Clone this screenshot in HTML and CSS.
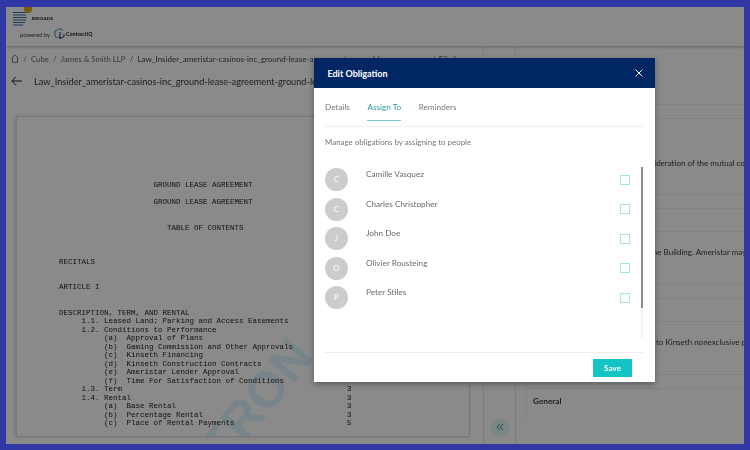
FILE: index.html
```html
<!DOCTYPE html>
<html>
<head>
<meta http-equiv="Content-Type" content="text/html; charset=utf-8"/>
<title>Edit Obligation</title>
<link rel="stylesheet" href="styles.css">
</head>
<body>
<div class="frame">
  <div class="page">
    <header class="topbar">
      <div class="brand">
        <svg class="brand-mark" width="15" height="15" viewBox="0 0 15 15">
          <g stroke="#2f6fa8" stroke-width="1.1">
            <path d="M0 1.5H13M0 4H13M0 6.5H13.5M0 9H13M0 11.5H12M0 14H10"/>
          </g>
          <circle cx="15" cy="-2" r="4" fill="#e0a90f"/>
        </svg>
        <span class="brand-name">BRIGADE</span>
      </div>
      <div class="powered">
        <span>powered by</span>
        <svg width="11" height="12" viewBox="0 0 11 12">
          <path d="M9 2.2L5.5 .7L1 3.2V8.5L3 9.8" fill="none" stroke="#2a86a8" stroke-width="1"/>
          <path d="M6 4V10M4 8.5L6 10.7L10 8.5V6" fill="none" stroke="#14305c" stroke-width="1"/>
        </svg>
        <span class="powered-name">ContractIQ</span>
      </div>
    </header>
    <div class="main">
      <div class="left">
        <div class="crumbs">
          <svg width="8" height="9" viewBox="0 0 8 9"><path d="M.5 4.2L4 .8L7.5 4.2M1.5 3.5V8.3H6.5V3.5" fill="none" stroke="#555" stroke-width=".8"/></svg>
          <span>/</span><span>Cube</span><span>/</span><span>James &amp; Smith LLP</span><span>/</span><span class="crumb-file">Law_Insider_ameristar-casinos-inc_ground-lease-agreement-ground-lease-agreement-Filed</span>
        </div>
        <div class="title-row">
          <svg width="11" height="10" viewBox="0 0 11 10"><path d="M11 5H1M5 .7L.8 5L5 9.3" fill="none" stroke="#222" stroke-width="1"/></svg>
          <span class="doc-title">Law_Insider_ameristar-casinos-inc_ground-lease-agreement-ground-lease-agreement-Filed</span>
        </div>
        <div class="doc">
          <div class="watermark">TRON</div>
<pre class="doc-text">                     GROUND LEASE AGREEMENT

                     GROUND LEASE AGREEMENT


                        TABLE OF CONTENTS



RECITALS


ARTICLE I


DESCRIPTION, TERM, AND RENTAL
     1.1. Leased Land; Parking and Access Easements
     1.2. Conditions to Performance
          (a)  Approval of Plans
          (b)  Gaming Commission and Other Approvals
          (c)  Kinseth Financing
          (d)  Kinseth Construction Contracts
          (e)  Ameristar Lender Approval
          (f)  Time For Satisfaction of Conditions
     1.3. Term                                                  3
     1.4. Rental                                                3
          (a)  Base Rental                                      3
          (b)  Percentage Rental                                3
          (c)  Place of Rental Payments                         5</pre>
        </div>
      </div>
      <div class="rail">
        <div class="collapse">
          <svg width="8" height="8" viewBox="0 0 8 8"><path d="M3.6 1L1 4L3.6 7M6.8 1L4.2 4L6.8 7" fill="none" stroke="#2a7f86" stroke-width=".9"/></svg>
        </div>
      </div>
      <div class="right">
        <div class="row row-head"></div>
        <div class="row row-long"><p class="clause-a">consideration of the mutual covenants</p></div>
        <div class="row row-head"></div>
        <div class="row row-sub"></div>
        <div class="row row-body"><p class="clause-b">the Building. Ameristar may</p></div>
        <div class="row row-head"></div>
        <div class="row row-sub"></div>
        <div class="row row-body"><p class="clause-c">to Kinseth nonexclusive parking</p></div>
        <div class="row row-head"></div>
        <div class="general">General</div>
      </div>
    </div>
  </div>

  <div class="backdrop"></div>

  <div class="modal">
    <div class="modal-head">
      <span>Edit Obligation</span>
      <svg width="8" height="8" viewBox="0 0 8 8"><path d="M.7 .7L7.3 7.3M7.3 .7L.7 7.3" stroke="#fff" stroke-width="1"/></svg>
    </div>
    <div class="tabs">
      <span class="tab">Details</span>
      <span class="tab tab-active">Assign To</span>
      <span class="tab">Reminders</span>
    </div>
    <p class="hint">Manage obligations by assigning to people</p>
    <div class="people">
      <div class="person"><span class="avatar">C</span><span class="name">Camille Vasquez</span><span class="check"></span></div>
      <div class="person"><span class="avatar">C</span><span class="name">Charles Christopher</span><span class="check"></span></div>
      <div class="person"><span class="avatar">J</span><span class="name">John Doe</span><span class="check"></span></div>
      <div class="person"><span class="avatar">O</span><span class="name">Olivier Rousteing</span><span class="check"></span></div>
      <div class="person"><span class="avatar">P</span><span class="name">Peter Stiles</span><span class="check"></span></div>
      <div class="scroll-track"><div class="scroll-thumb"></div></div>
    </div>
    <div class="modal-foot">
      <button class="save">Save</button>
    </div>
  </div>
</div>
</body>
</html>
```

FILE: styles.css
```css
html, body {
  margin: 0;
  padding: 0;
}

body {
  font-family: "Lato", sans-serif;
  background-color: #2f38a4;
}

.frame {
  position: relative;
  width: 750px;
  height: 450px;
  box-sizing: border-box;
  border: 6px solid #2f38a4;
  border-top-width: 7px;
  overflow: hidden;
}

.page {
  height: 100%;
  background-color: #fff;
  display: flex;
  flex-direction: column;
  filter: blur(0.4px);
}

/* top bar */
.topbar {
  height: 39px;
  box-sizing: border-box;
  padding: 4px 0 0 7px;
  box-shadow: 0 1px 3px rgba(0, 0, 0, 0.3);
}

.brand {
  display: flex;
  align-items: center;
  gap: 4px;
  height: 15px;
}

.brand-mark {
  overflow: visible;
}

.brand-name {
  font-size: 4.4px;
  font-weight: 900;
  letter-spacing: 0.3px;
  color: #222;
}

.powered {
  display: flex;
  align-items: center;
  gap: 4px;
  margin: 2px 0 0 7px;
  font-size: 5.8px;
  color: #444;
}

.powered-name {
  margin-left: -3px;
  font-size: 5.3px;
  font-weight: 700;
  color: #222;
}

.main {
  flex: 1;
  display: flex;
  min-height: 0;
}

/* document side */
.left {
  width: 477px;
  flex: none;
  box-sizing: border-box;
  padding-left: 5px;
  display: flex;
  flex-direction: column;
  overflow: hidden;
}

.crumbs {
  display: flex;
  align-items: center;
  gap: 4.2px;
  height: 11px;
  margin-top: 7px;
  font-size: 7.8px;
  color: #6a6a6a;
  white-space: nowrap;
}

.crumb-file {
  font-size: 8px;
  color: #444;
}

.title-row {
  display: flex;
  align-items: center;
  gap: 12px;
  height: 14px;
  margin-top: 10px;
  font-size: 9.2px;
  color: #3a3a3a;
  white-space: nowrap;
}

.doc {
  position: relative;
  flex: 1;
  margin: 28px 13px 7px 5px;
  min-height: 0;
  background-color: #fff;
  border: 1px solid #ddd;
  box-shadow: -1px 0 3px rgba(0, 0, 0, 0.15);
  overflow: hidden;
}

.doc-text {
  position: relative;
  margin: 0;
  padding: 64px 0 0 42px;
  font-family: "Liberation Mono", monospace;
  font-size: 7.5px;
  line-height: 8.5px;
  color: #222;
}

.watermark {
  position: absolute;
  left: 169px;
  top: 259px;
  font-family: "Liberation Sans", sans-serif;
  font-size: 50px;
  font-weight: 700;
  line-height: 50px;
  color: #dcf4fd;
  transform: rotate(-50deg);
}

/* right panel */
.rail {
  width: 33px;
  flex: none;
  box-sizing: border-box;
  border-left: 1px solid #e8e8e8;
  border-right: 1px solid #e8e8e8;
  display: flex;
  align-items: flex-end;
  justify-content: center;
  padding-bottom: 8px;
}

.collapse {
  width: 18px;
  height: 18px;
  border-radius: 50%;
  background-color: #defaf4;
  display: flex;
  align-items: center;
  justify-content: center;
}

.right {
  flex: 1;
  min-width: 0;
  padding-top: 58px;
  overflow: hidden;
  font-size: 8px;
  color: #3a3a3a;
}

.right p {
  margin: 0;
  white-space: nowrap;
}

.row {
  border-top: 1px solid #efefef;
  box-sizing: border-box;
}

.row-head {
  height: 14px;
}

.row-sub {
  height: 23px;
}

.row-body {
  height: 53px;
  padding-top: 15px;
}

.row-long {
  height: 76px;
  padding-top: 39px;
}

.clause-a {
  padding-left: 122px;
}

.clause-b {
  padding-left: 134px;
}

.clause-c {
  padding-left: 140px;
}

.general {
  margin-left: 10px;
  height: 32px;
  box-sizing: border-box;
  padding: 7px 0 0 6px;
  border-top: 1px solid #efefef;
  border-left: 1px solid #efefef;
  font-size: 8.2px;
  font-weight: 700;
}

/* overlay */
.backdrop {
  position: absolute;
  inset: 0;
  background-color: rgba(0, 0, 0, 0.46);
}

.modal {
  position: absolute;
  left: 308px;
  top: 51px;
  width: 341px;
  height: 324px;
  background-color: #fff;
  box-shadow: 0 2px 6px rgba(0, 0, 0, 0.35);
  display: flex;
  flex-direction: column;
  filter: blur(0.25px);
}

.modal-head {
  flex: none;
  height: 30px;
  box-sizing: border-box;
  padding: 0 12px 0 13.5px;
  background-color: #002663;
  color: #fff;
  font-size: 9px;
  font-weight: 700;
  display: flex;
  align-items: center;
  justify-content: space-between;
}

.tabs {
  flex: none;
  display: flex;
  gap: 17.5px;
  height: 39px;
  margin: 0 12px 0 11px;
  padding-top: 14px;
  box-sizing: border-box;
  border-bottom: 1px solid #eee;
  font-size: 8.2px;
  color: #777;
}

.tab {
  height: 19px;
  box-sizing: border-box;
}

.tab-active {
  color: #2a9d9d;
  border-bottom: 1px solid #7fc4c4;
}

.hint {
  flex: none;
  margin: 10px 0 0 11px;
  font-size: 7.9px;
  line-height: 11px;
  color: #777;
}

.people {
  position: relative;
  flex: none;
  height: 171px;
  margin: 19px 12px 0 11px;
  padding-top: 1px;
  box-sizing: border-box;
}

.person {
  display: flex;
  height: 29.5px;
  align-items: flex-start;
  font-size: 8.2px;
  color: #6a6a6a;
}

.avatar {
  flex: none;
  width: 23px;
  height: 23px;
  border-radius: 50%;
  background-color: #ccc;
  color: #fff;
  font-size: 8px;
  line-height: 23px;
  text-align: center;
}

.name {
  flex: 1;
  margin-left: 18px;
  padding-top: 1px;
  line-height: 11px;
}

.check {
  flex: none;
  box-sizing: border-box;
  width: 10px;
  height: 10px;
  margin: 6.5px 13px 0 0;
  border: 1px solid #a9e2e2;
}

.scroll-track {
  position: absolute;
  right: 0;
  top: 0;
  width: 2px;
  height: 171px;
  background-color: #f1f5f1;
}

.scroll-thumb {
  height: 141px;
  background-color: #8a8a8a;
}

.modal-foot {
  flex: 1;
  margin: 14px 12px 0 11px;
  border-top: 1px solid #eee;
  padding-top: 6px;
  display: flex;
  justify-content: flex-end;
}

.save {
  width: 39px;
  height: 18px;
  margin-right: 11px;
  padding: 0;
  border: none;
  background-color: #14c4c4;
  color: #fff;
  font-family: "Lato", sans-serif;
  font-size: 8.2px;
  font-weight: 700;
}
```
